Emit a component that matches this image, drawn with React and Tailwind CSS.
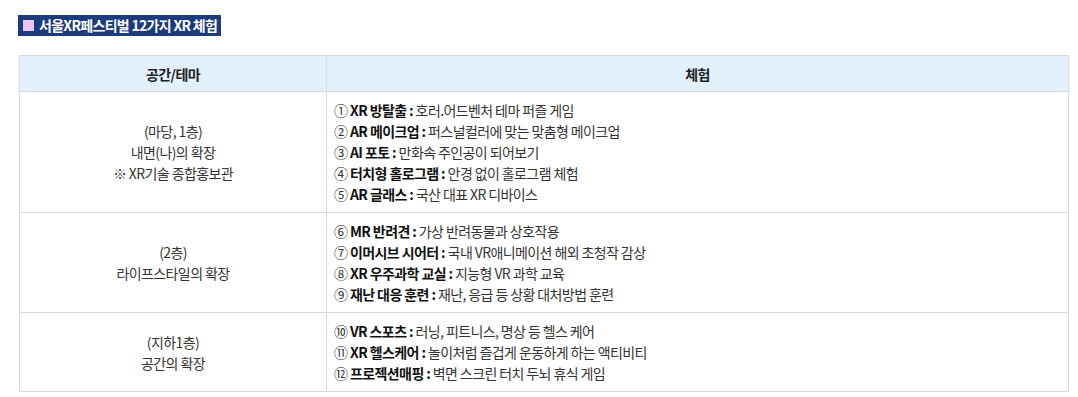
const rows = [
  {
    place: ['(마당, 1층)', '내면(나)의 확장', '※ XR기술 종합홍보관'],
    items: [
      ['①', 'XR 방탈출', '호러.어드벤처 테마 퍼즐 게임'],
      ['②', 'AR 메이크업', '퍼스널컬러에 맞는 맞춤형 메이크업'],
      ['③', 'AI 포토', '만화속 주인공이 되어보기'],
      ['④', '터치형 홀로그램', '안경 없이 홀로그램 체험'],
      ['⑤', 'AR 글래스', '국산 대표 XR 디바이스'],
    ],
  },
  {
    place: ['(2층)', '라이프스타일의 확장'],
    items: [
      ['⑥', 'MR 반려견', '가상 반려동물과 상호작용'],
      ['⑦', '이머시브 시어터', '국내 VR애니메이션 해외 초청작 감상'],
      ['⑧', 'XR 우주과학 교실', '지능형 VR 과학 교육'],
      ['⑨', '재난 대응 훈련', '재난, 응급 등 상황 대처방법 훈련'],
    ],
  },
  {
    place: ['(지하1층)', '공간의 확장'],
    items: [
      ['⑩', 'VR 스포츠', '러닝, 피트니스, 명상 등 헬스 케어'],
      ['⑪', 'XR 헬스케어', '놀이처럼 즐겁게 운동하게 하는 액티비티'],
      ['⑫', '프로젝션매핑', '벽면 스크린 터치 두뇌 휴식 게임'],
    ],
  },
];

export default function App() {
  return (
    <div
      className="bg-white w-[1078px] h-[397px] pt-[15px] pl-[18px] text-[#333]"
      style={{ fontFamily: '"Noto Sans CJK KR", "Noto Sans", sans-serif' }}
    >
      <div className="flex w-fit items-center gap-[5px] h-[21px] bg-[#1c3a7e] pl-[5px] pr-[4px] text-white text-[14px] leading-[21px] font-bold tracking-[-0.7px]">
        <span className="w-[11px] h-[11px] bg-[#e9c6f2]" />
        서울XR페스티벌 12가지 XR 체험
      </div>

      <table className="mt-[19px] ml-[1px] w-[1050px] border-collapse text-[14px] tracking-[-0.6px]">
        <colgroup>
          <col className="w-[307px]" />
          <col />
        </colgroup>
        <thead>
          <tr className="h-[36px] bg-[#e3f0fd]">
            <th className="border border-[#d9d9d9] font-bold text-[#222] p-0 leading-[20px]">공간/테마</th>
            <th className="border border-[#d9d9d9] font-bold text-[#222] p-0 leading-[20px]">체험</th>
          </tr>
        </thead>
        <tbody>
          {rows.map((r, i) => (
            <tr key={i}>
              <td className="border border-[#d9d9d9] text-center leading-[21px] pt-[8px] pb-[7px]">
                {r.place.map((p) => (
                  <div key={p}>{p}</div>
                ))}
              </td>
              <td className="border border-[#d9d9d9] leading-[21px] pt-[8px] pb-[7px] pl-[7px]">
                {r.items.map(([n, b, t]) => (
                  <div key={n}>
                    <span>{n}</span>
                    <span className="font-bold text-[#111]"> {b} :</span> {t}
                  </div>
                ))}
              </td>
            </tr>
          ))}
        </tbody>
      </table>
    </div>
  );
}
